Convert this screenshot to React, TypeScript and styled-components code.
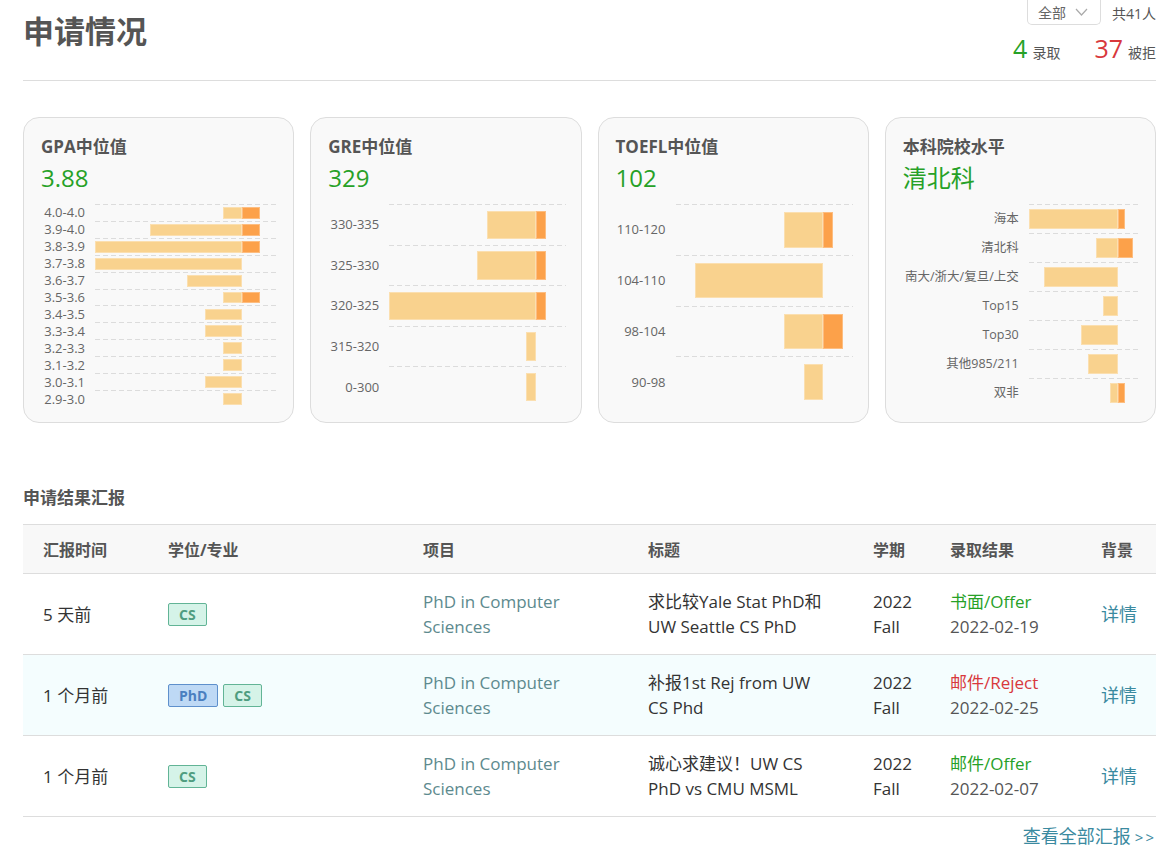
import * as React from "react";
import styled, { createGlobalStyle } from "styled-components";

const GlobalStyle = createGlobalStyle`
  body {
    margin: 0;
    background: #fff;
    font-family: "Open Sans", "Noto Sans CJK SC", sans-serif;
    color: #333;
  }
`;

const GREEN = "#27a127";
const RED = "#d8383c";
const TEAL = "#3b8aa0";

interface ChartRow {
  label: string;
  rejected: number;
  admitted: number;
}

interface ChartCardData {
  title: string;
  value: string;
  labelWidth: number;
  labelSize: number;
  left: number;
  right: number;
  rows: ChartRow[];
}

const cards: ChartCardData[] = [
  {
    title: "GPA中位值",
    value: "3.88",
    labelWidth: 44,
    labelSize: 13,
    left: 8,
    right: 2,
    rows: [
      { label: "4.0-4.0", rejected: 1, admitted: 1 },
      { label: "3.9-4.0", rejected: 5, admitted: 1 },
      { label: "3.8-3.9", rejected: 8, admitted: 1 },
      { label: "3.7-3.8", rejected: 8, admitted: 0 },
      { label: "3.6-3.7", rejected: 3, admitted: 0 },
      { label: "3.5-3.6", rejected: 1, admitted: 1 },
      { label: "3.4-3.5", rejected: 2, admitted: 0 },
      { label: "3.3-3.4", rejected: 2, admitted: 0 },
      { label: "3.2-3.3", rejected: 1, admitted: 0 },
      { label: "3.1-3.2", rejected: 1, admitted: 0 },
      { label: "3.0-3.1", rejected: 2, admitted: 0 },
      { label: "2.9-3.0", rejected: 1, admitted: 0 },
    ],
  },
  {
    title: "GRE中位值",
    value: "329",
    labelWidth: 51,
    labelSize: 13,
    left: 15,
    right: 3,
    rows: [
      { label: "330-335", rejected: 5, admitted: 1 },
      { label: "325-330", rejected: 6, admitted: 1 },
      { label: "320-325", rejected: 15, admitted: 1 },
      { label: "315-320", rejected: 1, admitted: 0 },
      { label: "0-300", rejected: 1, admitted: 0 },
    ],
  },
  {
    title: "TOEFL中位值",
    value: "102",
    labelWidth: 50,
    labelSize: 13,
    left: 15,
    right: 3,
    rows: [
      { label: "110-120", rejected: 4, admitted: 1 },
      { label: "104-110", rejected: 13, admitted: 0 },
      { label: "98-104", rejected: 4, admitted: 2 },
      { label: "90-98", rejected: 2, admitted: 0 },
    ],
  },
  {
    title: "本科院校水平",
    value: "清北科",
    labelWidth: 116,
    labelSize: 12.5,
    left: 12,
    right: 3,
    rows: [
      { label: "海本", rejected: 12, admitted: 1 },
      { label: "清北科", rejected: 3, admitted: 2 },
      { label: "南大/浙大/复旦/上交", rejected: 10, admitted: 0 },
      { label: "Top15", rejected: 2, admitted: 0 },
      { label: "Top30", rejected: 5, admitted: 0 },
      { label: "其他985/211", rejected: 4, admitted: 0 },
      { label: "双非", rejected: 1, admitted: 1 },
    ],
  },
];

interface Report {
  time: string;
  tags: ("PhD" | "CS")[];
  project: string[];
  title: string[];
  term: string[];
  result: string;
  ok: boolean;
  date: string;
}

const reports: Report[] = [
  {
    time: "5 天前",
    tags: ["CS"],
    project: ["PhD in Computer", "Sciences"],
    title: ["求比较Yale Stat PhD和", "UW Seattle CS PhD"],
    term: ["2022", "Fall"],
    result: "书面/Offer",
    ok: true,
    date: "2022-02-19",
  },
  {
    time: "1 个月前",
    tags: ["PhD", "CS"],
    project: ["PhD in Computer", "Sciences"],
    title: ["补报1st Rej from UW", "CS Phd"],
    term: ["2022", "Fall"],
    result: "邮件/Reject",
    ok: false,
    date: "2022-02-25",
  },
  {
    time: "1 个月前",
    tags: ["CS"],
    project: ["PhD in Computer", "Sciences"],
    title: ["诚心求建议！UW CS", "PhD vs CMU MSML"],
    term: ["2022", "Fall"],
    result: "邮件/Offer",
    ok: true,
    date: "2022-02-07",
  },
];

const Page = styled.div`
  width: 1133px;
  padding: 0 14px 20px 23px;
`;

const Header = styled.div`
  display: flex;
  justify-content: space-between;
  align-items: flex-start;
  height: 80px;
  border-bottom: 1px solid #ddd;
`;

const PageTitle = styled.h1`
  margin: 11px 0 0;
  font-size: 31px;
  line-height: 40px;
  font-weight: 700;
  color: #555;
`;

const Summary = styled.div`
  display: flex;
  flex-direction: column;
  align-items: flex-end;
`;

const FilterRow = styled.div`
  display: flex;
  align-items: center;
  gap: 11px;
  font-size: 14px;
  color: #555;
`;

const Dropdown = styled.div`
  display: flex;
  align-items: center;
  gap: 9px;
  height: 24px;
  padding: 0 12px 0 10px;
  border: 1px solid #ddd;
  border-top: none;
  border-radius: 0 0 5px 5px;
  color: #666;
`;

const Stats = styled.div`
  display: flex;
  align-items: baseline;
  gap: 34px;
  margin-top: 6px;
`;

const Stat = styled.span`
  font-size: 14px;
  color: #555;
`;

const StatNum = styled.span<{ $color: string }>`
  font-size: 25px;
  margin-right: 5px;
  color: ${(p) => p.$color};
`;

const CardGrid = styled.div`
  display: grid;
  grid-template-columns: repeat(4, 1fr);
  gap: 16px;
  margin-top: 36px;
`;

const Card = styled.div`
  height: 306px;
  box-sizing: border-box;
  padding: 17px 15px 0 17px;
  border: 1px solid #ddd;
  border-radius: 16px;
  background: #f9f9f9;
`;

const CardTitle = styled.div`
  font-size: 17px;
  line-height: 24px;
  font-weight: 700;
  color: #555;
`;

const CardValue = styled.div`
  margin-top: 3px;
  font-size: 24px;
  line-height: 32px;
  color: ${GREEN};
`;

const Chart = styled.div<{ $labelWidth: number; $rows: number }>`
  display: grid;
  grid-template-columns: ${(p) => p.$labelWidth}px 1fr;
  grid-template-rows: repeat(${(p) => p.$rows}, 1fr);
  column-gap: 10px;
  height: 203px;
  margin-top: 10px;
`;

const AxisLabel = styled.div<{ $size: number }>`
  align-self: center;
  text-align: right;
  white-space: nowrap;
  font-size: ${(p) => p.$size}px;
  line-height: 16px;
  color: #666;
`;

const Track = styled.div`
  display: flex;
  align-items: center;
  background: linear-gradient(to right, #dcdcdc 62%, transparent 0) top left / 8px 1px repeat-x;
`;

const BarPair = styled.div<{ $left: number; $right: number }>`
  display: grid;
  grid-template-columns: ${(p) => p.$left}fr ${(p) => p.$right}fr;
  width: 100%;
  height: 70%;
  margin-top: 1px;
`;

const BarSide = styled.div<{ $end?: boolean }>`
  display: flex;
  justify-content: ${(p) => (p.$end ? "flex-end" : "flex-start")};
`;

const Bar = styled.div<{ $tone: "light" | "dark" }>`
  height: 100%;
  box-sizing: border-box;
  background: ${(p) => (p.$tone === "light" ? "#f9d28e" : "#fca14a")};
  box-shadow: inset 0 0 0 1px rgba(255, 255, 255, 0.3);
`;

const SectionTitle = styled.h2`
  margin: 63px 0 14px;
  font-size: 17px;
  line-height: 24px;
  font-weight: 700;
  color: #555;
`;

const Table = styled.table`
  width: 1133px;
  border-collapse: collapse;
  table-layout: fixed;
  font-size: 17px;
`;

const Th = styled.th<{ $width: number }>`
  width: ${(p) => p.$width - 20}px;
  height: 48px;
  padding: 0 0 0 20px;
  text-align: left;
  font-size: 16px;
  font-weight: 700;
  color: #555;
  background: #f8f8f8;
  border-top: 1px solid #ddd;
  border-bottom: 1px solid #ddd;
`;

const Tr = styled.tr<{ $tinted: boolean }>`
  background: ${(p) => (p.$tinted ? "#f4fdfe" : "#fff")};
  border-bottom: 1px solid #ddd;
`;

const Td = styled.td<{ $color?: string }>`
  height: 80px;
  padding: 0 0 0 20px;
  line-height: 25px;
  vertical-align: middle;
  color: ${(p) => p.$color ?? "#333"};
`;

const Line = styled.div<{ $color?: string }>`
  white-space: nowrap;
  color: ${(p) => p.$color ?? "inherit"};
`;

const TagRow = styled.div`
  display: flex;
  gap: 5px;
`;

const Tag = styled.span<{ $kind: "PhD" | "CS" }>`
  display: inline-flex;
  align-items: center;
  height: 23px;
  box-sizing: border-box;
  padding: 0 10px;
  border-radius: 2px;
  font-size: 14px;
  font-weight: 700;
  border: 1px solid ${(p) => (p.$kind === "CS" ? "#62b496" : "#5e90cc")};
  background: ${(p) => (p.$kind === "CS" ? "#d5f3e8" : "#bed9f5")};
  color: ${(p) => (p.$kind === "CS" ? "#4f9d80" : "#4a7fc0")};
`;

const DetailLink = styled.a`
  color: ${TEAL};
  text-decoration: none;
  font-size: 18px;
`;

const MoreLink = styled.a`
  display: block;
  margin-top: 8px;
  text-align: right;
  font-size: 18px;
  line-height: 22px;
  color: ${TEAL};
  text-decoration: none;
`;

const Arrows = styled.span`
  font-size: 15px;
  letter-spacing: 2px;
  margin-left: 4px;
`;

const Chevron = () => (
  <svg width="13" height="8" viewBox="0 0 13 8" fill="none">
    <polyline points="1,1 6.5,7 12,1" stroke="#aaa" strokeWidth="1.2" />
  </svg>
);

const StatCard: React.FC<{ data: ChartCardData }> = ({ data }) => (
  <Card>
    <CardTitle>{data.title}</CardTitle>
    <CardValue>{data.value}</CardValue>
    <Chart $labelWidth={data.labelWidth} $rows={data.rows.length}>
      {data.rows.map((row) => (
        <React.Fragment key={row.label}>
          <AxisLabel $size={data.labelSize}>{row.label}</AxisLabel>
          <Track>
            <BarPair $left={data.left} $right={data.right}>
              <BarSide $end>
                <Bar
                  $tone="light"
                  style={{ width: `${(row.rejected / data.left) * 100}%` }}
                />
              </BarSide>
              <BarSide>
                {row.admitted > 0 && (
                  <Bar
                    $tone="dark"
                    style={{ width: `${(row.admitted / data.right) * 100}%` }}
                  />
                )}
              </BarSide>
            </BarPair>
          </Track>
        </React.Fragment>
      ))}
    </Chart>
  </Card>
);

const columns: [string, number][] = [
  ["汇报时间", 125],
  ["学位/专业", 255],
  ["项目", 225],
  ["标题", 225],
  ["学期", 77],
  ["录取结果", 151],
  ["背景", 75],
];

export default function App() {
  return (
    <Page>
      <GlobalStyle />
      <Header>
        <PageTitle>申请情况</PageTitle>
        <Summary>
          <FilterRow>
            <Dropdown>
              全部 <Chevron />
            </Dropdown>
            <span>共41人</span>
          </FilterRow>
          <Stats>
            <Stat>
              <StatNum $color={GREEN}>4</StatNum>录取
            </Stat>
            <Stat>
              <StatNum $color={RED}>37</StatNum>被拒
            </Stat>
          </Stats>
        </Summary>
      </Header>

      <CardGrid>
        {cards.map((c) => (
          <StatCard key={c.title} data={c} />
        ))}
      </CardGrid>

      <SectionTitle>申请结果汇报</SectionTitle>
      <Table>
        <thead>
          <tr>
            {columns.map(([name, width]) => (
              <Th key={name} $width={width}>
                {name}
              </Th>
            ))}
          </tr>
        </thead>
        <tbody>
          {reports.map((r, i) => (
            <Tr key={i} $tinted={i === 1}>
              <Td>{r.time}</Td>
              <Td>
                <TagRow>
                  {r.tags.map((t) => (
                    <Tag key={t} $kind={t}>
                      {t}
                    </Tag>
                  ))}
                </TagRow>
              </Td>
              <Td $color="#5d8a8e">
                {r.project.map((l) => (
                  <Line key={l}>{l}</Line>
                ))}
              </Td>
              <Td>
                {r.title.map((l) => (
                  <Line key={l}>{l}</Line>
                ))}
              </Td>
              <Td>
                {r.term.map((l) => (
                  <Line key={l}>{l}</Line>
                ))}
              </Td>
              <Td $color="#555">
                <Line $color={r.ok ? GREEN : RED}>{r.result}</Line>
                <Line>{r.date}</Line>
              </Td>
              <Td>
                <DetailLink href="#">详情</DetailLink>
              </Td>
            </Tr>
          ))}
        </tbody>
      </Table>
      <MoreLink href="#">
        查看全部汇报<Arrows>&gt;&gt;</Arrows>
      </MoreLink>
    </Page>
  );
}
